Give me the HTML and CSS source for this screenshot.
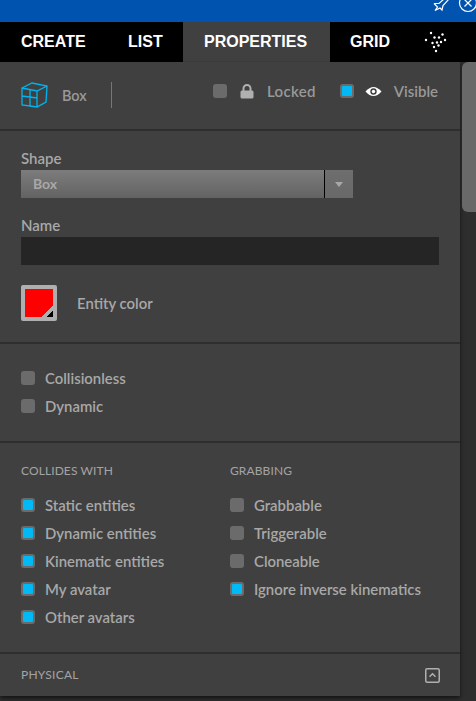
FILE: index.html
```html
<!DOCTYPE html>
<html lang="en">
<head>
<meta charset="utf-8">
<title>Properties</title>
<link rel="stylesheet" href="styles.css">
</head>
<body>
<div class="titlebar">
  <svg class="pin" width="20" height="14" viewBox="0 0 20 14" fill="none" stroke="#fff" stroke-width="1.200"><path d="M3 3.500 L8 3.500 L13 -1 M3 3.500 L6.500 7 L4 10.500 L9 8 L11 10 L12 5.500 L18 -1"/></svg>
  <svg class="close" width="25" height="14" viewBox="0 0 25 14" fill="none" stroke="#fff" stroke-width="1.200"><circle cx="17" cy="3" r="8.500"/><path d="M13.500 -0.500 L20.500 6.500 M20.500 -0.500 L13.500 6.500"/></svg>
</div>
<nav class="tabs">
  <div class="tab tab-create">CREATE</div>
  <div class="tab tab-list">LIST</div>
  <div class="tab tab-props">PROPERTIES</div>
  <div class="tab tab-grid">GRID</div>
  <svg class="particles" width="26" height="24" viewBox="0 0 26 24" fill="#fff"><circle cx="7" cy="3" r="1.200"/><circle cx="18.500" cy="4.500" r="1.200"/><circle cx="2" cy="10" r="1.200"/><circle cx="10.500" cy="7.500" r="1.200"/><circle cx="15" cy="7.500" r="1.200"/><circle cx="21" cy="10" r="1.200"/><circle cx="8.500" cy="13" r="1.200"/><circle cx="13" cy="12.500" r="1.200"/><circle cx="17" cy="12" r="1.200"/><circle cx="10" cy="17" r="1.200"/><circle cx="14.500" cy="15.500" r="1.200"/><circle cx="12" cy="21" r="1.200"/></svg>
</nav>
<div class="main">
  <div class="panel">
    <section class="sec sec-head">
      <div class="identity">
        <svg class="cube" width="27" height="26" viewBox="0 0 27 26" fill="none" stroke="#00b4ef" stroke-width="1.300"><path d="M1 6 L11 1 L26 4 L25 20 L16 25 L1 23 Z M1 6 L16 9 L26 4 M16 9 L16 25 M1 14 L16 16 M9 8 L9 14.500 M9 16 L9 24"/></svg>
        <span class="type">Box</span>
        <span class="vline"></span>
      </div>
      <div class="flags">
        <span class="check"></span>
        <svg class="lock" width="14" height="15" viewBox="0 0 14 15"><path d="M3.500 7 V4.500 a3.500 3.500 0 0 1 7 0 V7" fill="none" stroke="#b0b0b0" stroke-width="2"/><rect x="0.500" y="6.500" width="13" height="8" rx="1.500" fill="#b0b0b0"/></svg>
        <span class="lbl lbl-locked">Locked</span>
        <span class="check on"></span>
        <svg class="eye" width="17" height="11" viewBox="0 0 17 11"><path d="M0.500 5.500 Q8.500 -3.500 16.500 5.500 Q8.500 14.500 0.500 5.500 Z" fill="#fff"/><circle cx="8.500" cy="5.500" r="3.200" fill="#404040"/><circle cx="8.500" cy="5.500" r="1.700" fill="#fff"/></svg>
        <span class="lbl">Visible</span>
      </div>
    </section>
    <section class="sec sec-form">
      <div class="flabel">Shape</div>
      <div class="select"><span class="sel-val">Box</span><span class="sel-arrow"></span></div>
      <div class="flabel flabel-name">Name</div>
      <div class="input"></div>
      <div class="color-row">
        <div class="swatch"></div>
        <span class="lbl">Entity color</span>
      </div>
    </section>
    <section class="sec sec-phys">
      <div class="row"><span class="check"></span><span class="lbl">Collisionless</span></div>
      <div class="row"><span class="check"></span><span class="lbl">Dynamic</span></div>
    </section>
    <section class="sec sec-cols">
      <div class="col col-a">
        <h3 class="cap">COLLIDES WITH</h3>
        <div class="row"><span class="check on"></span><span class="lbl">Static entities</span></div>
        <div class="row"><span class="check on"></span><span class="lbl">Dynamic entities</span></div>
        <div class="row"><span class="check on"></span><span class="lbl">Kinematic entities</span></div>
        <div class="row"><span class="check on"></span><span class="lbl">My avatar</span></div>
        <div class="row"><span class="check on"></span><span class="lbl">Other avatars</span></div>
      </div>
      <div class="col">
        <h3 class="cap">GRABBING</h3>
        <div class="row"><span class="check"></span><span class="lbl">Grabbable</span></div>
        <div class="row"><span class="check"></span><span class="lbl">Triggerable</span></div>
        <div class="row"><span class="check"></span><span class="lbl">Cloneable</span></div>
        <div class="row"><span class="check on"></span><span class="lbl">Ignore inverse kinematics</span></div>
      </div>
    </section>
    <section class="sec sec-foot">
      <span class="cap cap-foot">PHYSICAL</span>
      <svg class="collapse" width="15" height="15" viewBox="0 0 15 15" fill="none" stroke="#b0b0b0"><rect x="0.750" y="0.750" width="13.500" height="13.500" rx="1.500" stroke-width="1.500"/><path d="M4.500 8.800 L7.500 5.800 L10.500 8.800" stroke-width="1.500"/></svg>
    </section>
  </div>
  <div class="scroll"><div class="thumb"></div></div>
</div>
</body>
</html>
```

FILE: styles.css
```css
* { box-sizing: border-box; }
html, body { margin: 0; height: 100%; overflow: hidden; }
body { width: 476px; height: 701px; background: #2e2e2e; font-family: "Lato", "Liberation Sans", sans-serif; color: #a8a8a8; }

.titlebar { height: 22px; background: #0054b0; display: flex; justify-content: flex-end; align-items: flex-start; overflow: hidden; }

.tabs { height: 40px; background: #000; display: flex; align-items: center; color: #fff; font: bold 16px "Liberation Sans", sans-serif; }
.tab { height: 40px; line-height: 40px; }
.tab-create { width: 108px; padding-left: 21px; }
.tab-list { width: 75px; padding-left: 20px; }
.tab-props { width: 147px; padding-left: 21px; background: #404040; }
.tab-grid { width: 93px; padding-left: 20px; }
.particles { margin-left: 1px; }

.main { display: flex; height: 639px; }
.panel { width: 460px; height: 634px; background: #404040; box-shadow: 0 2px 4px rgba(0,0,0,.6); }
.scroll { width: 16px; padding-left: 2px; }
.thumb { height: 150px; background: #696969; border-radius: 6px 0 0 6px; }

.sec { border-bottom: 2px solid #2e2e2e; }
.sec-head { height: 69px; padding: 20px 22px 0 21px; display: flex; justify-content: space-between; align-items: flex-start; }
.identity { display: flex; align-items: center; height: 26px; }
.type { margin-left: 14px; font-size: 14.500px; color: #999; font-weight: 600; }
.vline { width: 1px; height: 26px; background: #777; margin-left: 24px; }
.flags { display: flex; align-items: center; height: 16px; margin-top: 1px; }
.lock { margin-left: 13px; }
.lbl-locked { margin-left: 13px; margin-right: 24px; }
.eye { margin-left: 11px; margin-right: 12px; }

.lbl { font-size: 14.900px; font-weight: 600; color: #a8a8a8; white-space: nowrap; }
.flags .lbl { color: #999; font-size: 15px; }
.flags .lbl-locked { letter-spacing: .3px; }
.check { display: block; flex: none; width: 14px; height: 14px; border-radius: 3px; background: #6b6b6b; }
.check.on { background: #00b9f5; border: 2px solid #6b6b6b; }

.sec-form { height: 213px; padding: 19px 21px 0; }
.flabel { font-size: 15px; font-weight: 600; line-height: 17px; color: #a8a8a8; margin-bottom: 3px; }
.flabel-name { margin-top: 19px; }
.select { width: 332px; height: 28px; display: flex; justify-content: space-between; background: linear-gradient(#7c7c7c, #636363); }
.sel-val { padding-left: 12px; line-height: 28px; font-size: 14px; font-weight: 700; color: #a8a8a8; }
.sel-arrow { width: 29px; height: 28px; border-left: 1px solid #000; background: linear-gradient(#6e6e6e, #696969); position: relative; }
.sel-arrow::after { content: ""; position: absolute; left: 10px; top: 12px; border: 4px solid transparent; border-top: 5px solid #a8a8a8; border-bottom: 0; }
.input { width: 418px; height: 28px; background: #252525; }
.color-row { display: flex; align-items: center; margin-top: 20px; }
.swatch { width: 36px; height: 36px; background: linear-gradient(135deg, #f00 80%, #afafaf 80%, #afafaf 89%, #000 89%); border: 4px solid #afafaf; border-radius: 2px; margin-right: 20px; }

.sec-phys { height: 99px; padding: 20px 21px 0; }
.row { display: flex; align-items: center; height: 28px; gap: 10px; }

.sec-cols { height: 211px; padding: 20px 21px 0; display: flex; }
.col-a { width: 209px; }
.cap { margin: 0 0 12px; font-size: 12px; font-weight: 400; letter-spacing: .1px; line-height: 16px; color: #a4a4a4; }

.sec-foot { height: 43px; border: 0; padding: 13px 21px 0; display: flex; justify-content: space-between; align-items: flex-start; }
.cap-foot { margin: 0; letter-spacing: .25px; }
.collapse { margin-right: -1px; margin-top: 1px; }
```
